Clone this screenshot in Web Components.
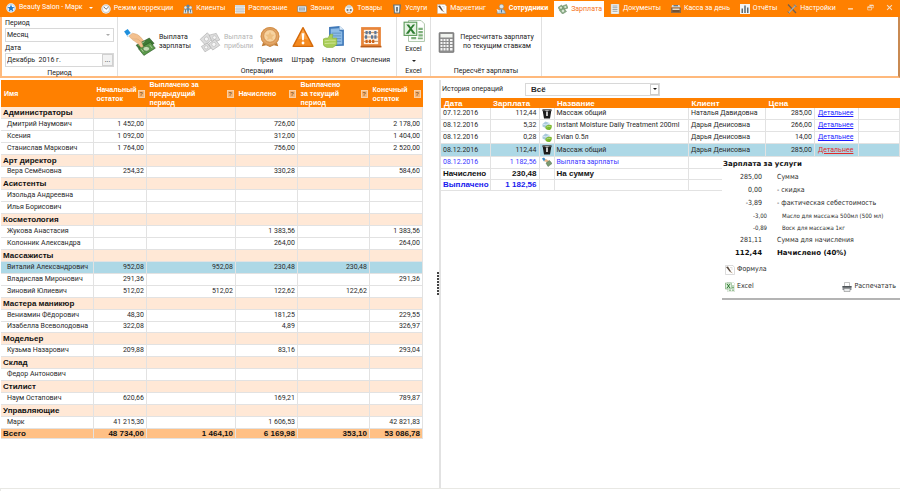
<!DOCTYPE html>
<html lang="ru">
<head>
<meta charset="utf-8">
<title>Beauty Salon</title>
<style>
html, body { height: 100%; margin: 0; }
body { background: #fff; color: #2a2a2a; font: 7px/9px Roboto, "Liberation Sans", sans-serif; overflow: hidden; }
</style>
</head>
<body>
<salon-app></salon-app>
<script>
const ICONS = {
  star: '<circle cx="10" cy="10" r="9.5" fill="#f4f9ff"/><circle cx="10" cy="10" r="7.6" fill="none" stroke="#7db4e6" stroke-width="1"/><path d="M10 3l2 4.900 5.200.4-4 3.400 1.300 5.100L10 14l-4.500 2.800 1.300-5.100-4-3.400L8 7.900z" fill="#1f78c8"/>',
  clock: '<circle cx="10" cy="10" r="9.500" fill="#e9edf0"/><circle cx="10" cy="10" r="7" fill="#fff" stroke="#9aa4ab"/><path d="M6 6l4 4.500L15 6" fill="none" stroke="#555" stroke-width="1.600"/>',
  people: '<g fill="#5a86a8"><circle cx="10" cy="4" r="3"/><path d="M6.500 8h7v7h-7z"/></g><g fill="#dfe9f0" stroke="#6d8190" stroke-width=".7"><circle cx="5" cy="7" r="3"/><path d="M1 19l1-8h6l1 8z"/><circle cx="15" cy="7" r="3"/><path d="M11 19l1-8h6l1 8z"/></g><path d="M5 11v6M15 11v6" stroke="#2b5f88" stroke-width="1.500"/>',
  calendar: '<rect x="0" y="2" width="20" height="17" fill="#f3f3f3"/><path d="M0 2h20v4H0z" fill="#d4dade"/><path d="M0 10h20M0 14.500h20M4 6v13M8 6v13M12 6v13M16 6v13" stroke="#9fa8b0" stroke-width="1"/>',
  phone: '<rect x="1" y="4" width="18" height="12" rx="2" fill="#e5eaee" stroke="#5d6a72"/><path d="M4 7h12v6H4z" fill="#8b979f"/><path d="M4 10h12M8 7v6M12 7v6" stroke="#dfe6ea"/>',
  goods: '<circle cx="10" cy="11" r="8.500" fill="#eef1f2"/><path d="M4 5l6-4 6 4-3 3H7z" fill="#c9d4da"/><circle cx="7" cy="12" r="2.200" fill="#7c6f66"/><circle cx="13.500" cy="12" r="2.200" fill="#7c6f66"/><path d="M6 16q4 2 8 0" stroke="#b78d6b" fill="none" stroke-width="1.500"/>',
  service: '<path d="M2 1h16l-2 18H4z" fill="#66747b"/><path d="M5 3h10l-1 14H6z" fill="#eef2f4"/><path d="M8.500 6h3v9h-3z" fill="#49565c"/>',
  note: '<path d="M1 1h15l3 4v14H1z" fill="#fff" stroke="#b8b8b8"/><path d="M2 4l4-1 6 10-2 1z" fill="#5a4a3e"/><path d="M10 14l2-1 4 4z" fill="#a58a6a"/><path d="M10 5h5M12 8h4" stroke="#c5c5c5"/>',
  person: '<circle cx="11" cy="5" r="4.500" fill="#dfe5e9" stroke="#78868e"/><path d="M2 19q0-8 9-9 8 1 8 9z" fill="#bcd0de" stroke="#6f7d86"/><path d="M1 10l5 2-2 5z" fill="#f3f6f8"/><path d="M11 11v6" stroke="#48779c" stroke-width="2"/>',
  money: '<g fill="#8fb08b" stroke="#5f7f5d" stroke-width="1"><path d="M0 7l7-5 4 6-7 5z"/><path d="M9 4l8-3 3 7-8 3z"/><path d="M3 13l8-5 6 7-8 5z"/></g><circle cx="6" cy="7.500" r="2" fill="#dbe8d8"/><circle cx="14.500" cy="6" r="2" fill="#dbe8d8"/><circle cx="10" cy="14" r="2.300" fill="#dbe8d8"/>',
  doc: '<rect x="2" y="0" width="16" height="20" fill="#f5f5f2" stroke="#b7b7b0"/><path d="M5 4h10M5 7.500h10M5 11h10M5 14.500h10" stroke="#7d8a90" stroke-width="1.500"/>',
  till: '<path d="M2 2h15l2 5H1z" fill="#d7dadb"/><path d="M0 7h20v11H0z" fill="#8d6a48"/><path d="M3 9h14v3H3z" fill="#e8d9c3"/><path d="M3 14h14" stroke="#3f2f22" stroke-width="1.500"/><path d="M5 3.500h9" stroke="#4a5960" stroke-width="2"/>',
  chart: '<rect x="0" y="0" width="20" height="20" fill="#f2f4f5"/><path d="M3 9h3v9H3zM8.500 3h3v15h-3zM14 7h3v11h-3z" fill="#5b6970"/>',
  tools: '<path d="M2 1l16 17" stroke="#6a5e55" stroke-width="2.500"/><path d="M18 2L3 18" stroke="#a2a9ad" stroke-width="2.500"/><path d="M14 1l5 5M1 15l4 4" stroke="#6d777d" stroke-width="2"/>',
  hand: '<path d="M0 4l6-4 6 8-6 5z" fill="#1f8fdc"/><path d="M5 11l7-5 2 2-7 6z" fill="#e9f4fc"/><path d="M8 12l6-5q9 1 13 6l6 7-4 2-8-5-8 0z" fill="#f3c08e" stroke="#d39a63" stroke-width=".8"/><g stroke="#244d1f" stroke-width=".9"><path d="M20 27l22-12 8 9-21 14z" fill="#3f7a35"/><path d="M24 33l20-11 8 10-19 12z" fill="#5b9a4a"/></g><ellipse cx="37" cy="33" rx="5.500" ry="4" fill="#c4dbb4" stroke="#3d6b33"/><path d="M29 34l3 4M43 27l4 5M24 27l10-6" stroke="#d2e4c5" stroke-width="1.200"/><path d="M14 18l10 7 4 6 4-2-3-7-6-5z" fill="#f3c08e" stroke="#d39a63" stroke-width=".6"/>',
  handSmall: '<path d="M0 3l4-2 4 5-4 3z" fill="#3a8ccb"/><path d="M4 8l4-4 8 5 2 4-5-1z" fill="#e8b78a"/><path d="M8 12l7-5 5 6-8 6z" fill="#7a9a72" stroke="#4f6d48"/>',
  cashGray: '<g fill="#dedede" stroke="#a8a8a8" stroke-width="1"><path d="M2 14L14 3l9 10-12 11z"/><path d="M17 7l12-3 6 11-12 5z"/><path d="M16 22l11-8 8 10-12 8z"/><path d="M4 26l10-6 6 9-10 6z"/></g><g fill="#f7f7f7" stroke="#b4b4b4"><circle cx="12.500" cy="13.500" r="3.500"/><circle cx="26" cy="11" r="3"/><circle cx="25" cy="22.500" r="3.500"/><circle cx="12" cy="27.500" r="2.800"/></g>',
  medal: '<path d="M9 25L5 37l8-2 7 3 7-3 8 2-4-12z" fill="#bf7b35"/><circle cx="20" cy="19" r="17" fill="#e3a566"/><circle cx="20" cy="19" r="16" fill="none" stroke="#d2924e" stroke-width="2"/><circle cx="20" cy="18" r="11.500" fill="#f7d3a0" stroke="#cf8b45" stroke-width="1.500"/><path d="M20 10l2.500 5.500 6 .6-4.500 4 1.300 5.900-5.300-3-5.300 3 1.300-5.900-4.500-4 6-.6z" fill="#eebf80"/>',
  warn: '<path d="M20 3L38 37H2z" fill="#f58a1f" stroke="#d46a0b" stroke-width="2.500" stroke-linejoin="round"/><path d="M20 6L30 25q-12-3-19-1z" fill="#ffb05a" opacity=".6"/><path d="M17.500 13h5l-1 13h-3z" fill="#fff"/><circle cx="20" cy="31" r="2.600" fill="#fff"/>',
  tax: '<path d="M11 2l19-2 8 7v29l-27 1z" fill="#3f78b8"/><path d="M14 5l15-1 1 5 5 1v23l-21 1z" fill="#8dbbe6"/><path d="M16 13h17M16 18h17M16 23h17M16 28h17" stroke="#4d80b5" stroke-width="1.200"/><path d="M30 0v7h8z" fill="#dcebf8"/><path d="M0 24q5-3 9-2l4-7h5l-1 7h8v12l-7 5H7q-6-2-7-6z" fill="#a9cd58" stroke="#83ab3a" stroke-width="1"/><path d="M3 27q9-2 20-1M3 32q9-1 20-1" stroke="#d4e8a0" stroke-width="1.500" fill="none"/>',
  abacus: '<path d="M2 2h36v36H2z" fill="#e8853a"/><path d="M7 7h26v26H7z" fill="#fff3e4"/><path d="M7 12h26M7 20h26M7 28h26" stroke="#a0662e" stroke-width="1.200"/><g fill="#5e7898"><path d="M10 9h4v6h-4zM16 9h4v6h-4zM26 9h4v6h-4zM9 17h4v6H9zM20 17h4v6h-4zM26 17h4v6h-4z"/></g><g fill="#cf6319"><path d="M10 25h4v6h-4zM16 25h4v6h-4zM22 25h4v6h-4z"/></g><path d="M1 36h38v3H1z" fill="#b95b17"/>',
  excel: '<path d="M10 1h23l6 6v32H10z" fill="#fff" stroke="#9dba99" stroke-width="1.500"/><path d="M1 3h25v26H1z" fill="#5b9a59"/><path d="M3 5h21v22H3z" fill="#e7f3e4"/><path d="M6 8h5l3 5 4-5h4l-6 8 7 9h-5l-4-6-4 6H5l7-9z" fill="#2e7d32"/><g fill="#7db07a"><path d="M28 14h8v4h-8zM28 20h8v4h-8zM28 26h8v4h-8zM15 31h9v4h-9zM27 32h9v3h-9z"/></g>',
  calc: '<rect x="2" y="1" width="30" height="40" rx="2" fill="#8c8c8c" stroke="#5d5d5d"/><rect x="5" y="4" width="24" height="7" fill="#f1f4ef"/><g fill="#f4f4f4"><path d="M5 14h4v4H5zM11 14h4v4h-4zM17 14h4v4h-4zM24 14h5v4h-5zM5 20h4v4H5zM11 20h4v4h-4zM17 20h4v4h-4zM24 20h5v4h-5zM5 26h4v4H5zM11 26h4v4h-4zM17 26h4v4h-4zM24 26h5v4h-5zM5 32h4v5H5zM11 32h4v5h-4zM17 32h4v5h-4zM24 32h5v5h-5z"/></g>',
  bin: '<path d="M1 1h18l-3 18H4z" fill="#1b1b1b"/><path d="M1 1h18v3H1z" fill="#555"/><path d="M8.500 6h3v8h-3z" fill="#fff"/><path d="M6 3q4 4 8 0" fill="#fff"/>',
  cubes: '<path d="M1 6l6-5 8 3-1 8-7 2-6-3z" fill="#a9c9dc"/><path d="M1 6l7 2 7-4" stroke="#e6f1f7" stroke-width="1.500" fill="none"/><path d="M7 11q4-5 12-3 2 6-3 10-6 1-9-3z" fill="#7cb82f"/><path d="M9 12q4-2 8-1" stroke="#c8e594" stroke-width="1.500" fill="none"/>',
  printer: '<path d="M5 1h10v8H5z" fill="#fff" stroke="#888"/><path d="M1 8h18v8H1z" fill="#8e9397"/><path d="M1 8h18v3H1z" fill="#4e5458"/><path d="M4 13h12v6H4z" fill="#e8eaeb" stroke="#777"/>',
  min: '<path d="M3 14h14" stroke="#fff" stroke-width="3"/>',
  restore: '<path d="M7 3h11v8h-4" fill="none" stroke="#f3ddc8" stroke-width="2"/><path d="M2 8h11v9H2z" fill="none" stroke="#f3ddc8" stroke-width="2"/><path d="M2 9h11M7 4h11" stroke="#f3ddc8" stroke-width="3"/>',
  close: '<path d="M3 3l14 14M17 3L3 17" stroke="#f3ddc8" stroke-width="3"/>'
};
const BOXES = { hand: '0 0 53 45', cashGray: '0 0 37 37', medal: '0 0 40 40', warn: '0 0 40 40', tax: '0 0 40 40', abacus: '0 0 40 40', excel: '0 0 40 40', calc: '0 0 34 42' };

const define = (name, render) => customElements.define(name, class extends HTMLElement {
  connectedCallback() {
    if (this.shadowRoot) return;
    const t = document.createElement('template');
    t.innerHTML = render(this);
    this.attachShadow({ mode: 'open' }).append(t.content.cloneNode(true));
  }
});

const RESET = `:host,*{box-sizing:border-box} button,input,select{font:inherit;color:inherit;margin:0;padding:0;border:0;background:none;border-radius:0}`;

define('ui-icon', el => `
  <style>:host{display:block;flex:none;width:10px;height:10px} svg{display:block;width:100%;height:100%}</style>
  <svg viewBox="${BOXES[el.getAttribute('name')] || '0 0 20 20'}" aria-hidden="true">${ICONS[el.getAttribute('name')]}</svg>`);

define('app-tab', el => `
  <style>${RESET}
    :host{display:flex;color:#fff}
    button{display:flex;align-items:center;gap:3px;padding:0 4px;white-space:nowrap}
    :host([strong]) button{font-weight:bold}
    :host([active]){margin-top:1px}
    :host([active]) button{background:#fff;color:#f5741c;padding:0 2px 0 4px}
  </style>
  <button role="tab" aria-selected="${el.hasAttribute('active')}"><ui-icon name="${el.getAttribute('icon')}"></ui-icon><slot></slot></button>`);

define('title-bar', () => `
  <style>${RESET}
    :host{display:flex;height:17px;background:#ff8000;color:#fff}
    .brand{display:flex;align-items:center;gap:3px;padding:0 4px 2px 6px;white-space:nowrap}
    .brand i{border:2px solid transparent;border-top-color:#fff;border-bottom:0;margin-left:3px}
    nav{flex:1;display:flex;justify-content:space-between}
    .win{display:flex;align-items:center;justify-content:space-between;width:60px;padding:0 7px 2px 7px}
    .win ui-icon{width:7px;height:7px}
  </style>
  <button class="brand"><ui-icon name="star"></ui-icon>Beauty Salon - Марк<i></i></button>
  <nav role="tablist">
    <app-tab icon="clock">Режим коррекции</app-tab>
    <app-tab icon="people">Клиенты</app-tab>
    <app-tab icon="calendar">Расписание</app-tab>
    <app-tab icon="phone">Звонки</app-tab>
    <app-tab icon="goods">Товары</app-tab>
    <app-tab icon="service">Услуги</app-tab>
    <app-tab icon="note">Маркетинг</app-tab>
    <app-tab icon="person" strong>Сотрудники</app-tab>
    <app-tab icon="money" active>Зарплата</app-tab>
    <app-tab icon="doc">Документы</app-tab>
    <app-tab icon="till">Касса за день</app-tab>
    <app-tab icon="chart">Отчёты</app-tab>
    <app-tab icon="tools">Настройки</app-tab>
  </nav>
  <div class="win">
    <button aria-label="Свернуть"><ui-icon name="min"></ui-icon></button>
    <button aria-label="Восстановить"><ui-icon name="restore"></ui-icon></button>
    <button aria-label="Закрыть"><ui-icon name="close"></ui-icon></button>
  </div>`);

define('ribbon-group', el => `
  <style>${RESET}
    :host{display:flex;flex-direction:column;border-right:1px solid #e0e0e0;padding-top:1px}
    .body{flex:1;display:flex}
    .label{text-align:center;line-height:10px}
  </style>
  <div class="body"><slot></slot></div><div class="label">${el.getAttribute('label')}</div>`);

define('ribbon-button', el => `
  <style>${RESET}
    :host{display:flex}
    button{display:flex;flex-direction:column;align-items:center;white-space:nowrap}
    ui-icon{width:22px;height:22px}
    :host([wide]) button{flex-direction:row;gap:3px}
    :host([wide=hand]) ui-icon{width:32px;height:27px}
    :host([wide=calc]) ui-icon{width:17px;height:21px}
    :host([wide=calc]) button{gap:5px}
    :host([wide=hand]) button, :host([wide=gray]) button{text-align:left}
    :host([tall]) button{padding-top:8px;gap:8px;justify-content:flex-start}
    :host([menu]) button{gap:3px;padding-top:2px;justify-content:flex-start}
    :host([menu]) i{display:block;border:2px solid transparent;border-top-color:#222;border-bottom:0;margin-top:3px}
    button:disabled{color:#b4b4b4}
  </style>
  <button ${el.hasAttribute('disabled') ? 'disabled' : ''}><ui-icon name="${el.getAttribute('icon')}"></ui-icon><span><slot></slot></span>${el.hasAttribute('menu') ? '<i></i>' : ''}</button>`);

define('period-fields', () => `
  <style>${RESET}
    :host{display:flex;flex-direction:column;flex:1;padding:0 3px 0 3px}
    label{line-height:10px}
    .box{display:flex;align-items:center;height:14px;border:1px solid #d8d8d8;background:#fff;margin-bottom:1px}
    select,input{flex:1;min-width:0;height:12px;appearance:none;padding-left:1px;outline:0}
    i{border:2px solid transparent;border-top-color:#aaa;border-bottom:0;margin-right:3px}
    button{width:11px;height:12px;border:1px solid #d0d0d0;background:#f2f2f2;line-height:8px}
  </style>
  <label for="p">Период</label>
  <div class="box"><select id="p"><option>Месяц</option></select><i></i></div>
  <label for="d">Дата</label>
  <div class="box"><input id="d" value="Декабрь  2016 г."><button aria-label="Выбрать дату">...</button></div>`);

define('app-ribbon', () => `
  <style>${RESET}
    :host{display:flex;height:61px;border:solid #ffb97c;border-width:0 2px 2px;border-right-color:#c98a52;background:#fff;color:#222}
    ribbon-group:nth-of-type(1){width:116px}
    ribbon-group:nth-of-type(2){width:279px}
    ribbon-group:nth-of-type(3){width:34px}
    ribbon-group:nth-of-type(4){width:111px}
    .ops{flex:1;display:grid;grid-template-columns:75px 58px 30px 32px 30px 1fr;padding:0 4px 0 6px}
    .ops [tall]:not([icon=medal]){justify-content:center}
    .mid{flex:1;display:flex;justify-content:center}
  </style>
  <ribbon-group label="Период"><period-fields></period-fields></ribbon-group>
  <ribbon-group label="Операции"><div class="ops">
    <ribbon-button wide="hand" icon="hand">Выплата<br>зарплаты</ribbon-button>
    <ribbon-button wide="gray" icon="cashGray" disabled>Выплата<br>прибыли</ribbon-button>
    <ribbon-button tall icon="medal">Премия</ribbon-button>
    <ribbon-button tall icon="warn">Штраф</ribbon-button>
    <ribbon-button tall icon="tax">Налоги</ribbon-button>
    <ribbon-button tall icon="abacus">Отчисления</ribbon-button>
  </div></ribbon-group>
  <ribbon-group label="Excel"><div class="mid"><ribbon-button menu icon="excel">Excel</ribbon-button></div></ribbon-group>
  <ribbon-group label="Пересчёт зарплаты"><div class="mid"><ribbon-button wide="calc" icon="calc">Пересчитать зарплату<br>по текущим ставкам</ribbon-button></div></ribbon-group>`);

const TABLE = `
  table{width:100%;border-collapse:collapse;table-layout:fixed}
  th,td{padding:0;font-weight:normal;text-align:left;white-space:nowrap;overflow:hidden}
  tbody td,tbody th,tfoot td,tfoot th{border-right:1px solid #e2e2e2;border-bottom:1px solid #e2e2e2;line-height:9px}
  thead{background:#ff8000;color:#fff}
  thead th{font:bold 7px/9px "Liberation Sans",sans-serif}
  .n{text-align:right}
  .sel{background:#add8e6}`;

const STAFF = [
  ['Администраторы'],
  ['Дмитрий Наумович', '1 452,00', '', '726,00', '', '2 178,00'],
  ['Ксения', '1 092,00', '', '312,00', '', '1 404,00'],
  ['Станислав Маркович', '1 764,00', '', '756,00', '', '2 520,00'],
  ['Арт директор'],
  ['Вера Семёновна', '254,32', '', '330,28', '', '584,60'],
  ['Асистенты'],
  ['Изольда Андреевна', '', '', '', '', ''],
  ['Илья Борисович', '', '', '', '', ''],
  ['Косметология'],
  ['Жукова Анастасия', '', '', '1 383,56', '', '1 383,56'],
  ['Колонник Александра', '', '', '264,00', '', '264,00'],
  ['Массажисты'],
  ['Виталий Александрович', '952,08', '952,08', '230,48', '230,48', ''],
  ['Владислав Миронович', '291,36', '', '', '', '291,36'],
  ['Зиновий Юлиевич', '512,02', '512,02', '122,62', '122,62', ''],
  ['Мастера маникюр'],
  ['Вениамин Фёдорович', '48,30', '', '181,25', '', '229,55'],
  ['Изабелла Всеволодовна', '322,08', '', '4,89', '', '326,97'],
  ['Модельер'],
  ['Кузьма Назарович', '209,88', '', '83,16', '', '293,04'],
  ['Склад'],
  ['Федор Антонович', '', '', '', '', ''],
  ['Стилист'],
  ['Наум Остапович', '620,66', '', '169,21', '', '789,87'],
  ['Управляющие'],
  ['Марк', '41 215,30', '', '1 606,53', '', '42 821,83']
];
const TOTAL = ['Всего', '48 734,00', '1 464,10', '6 169,98', '353,10', '53 086,78'];
const HEADS = ['Начальный<br>остаток', 'Выплачено за<br>предыдущий<br>период', 'Начислено', 'Выплачено<br>за текущий<br>период', 'Конечный<br>остаток'];
const cells = r => [1, 2, 3, 4, 5].map(i => `<td class="n">${r[i] || ''}</td>`).join('');

define('staff-table', () => `
  <style>${RESET}${TABLE}
    :host{display:block}
    table{height:359px}
    thead th{height:27px;padding-left:3px}
    thead div{display:flex;align-items:center;justify-content:space-between}
    thead button{flex:none;width:7px;height:8px;margin-right:2px;background:#f7b473;border:1px solid #f9cfa4;color:#8a5a2a;font:bold 6px/6px "Liberation Sans",sans-serif}
    tbody th{padding-left:6px}
    td{padding-right:2px}
    .group{background:#ffe8d6}
    .group th,tfoot th,tfoot td{font:bold 8px/9px "Liberation Sans",sans-serif;color:#111;padding-left:2px}
    tfoot{background:#ffc085}
  </style>
  <table>
    <colgroup><col><col style="width:53px"><col style="width:89px"><col style="width:62px"><col style="width:72px"><col style="width:53px"></colgroup>
    <thead><tr><th scope="col">Имя</th>${HEADS.map(h => `<th scope="col"><div><span>${h}</span><button aria-label="Справка">?</button></div></th>`).join('')}</tr></thead>
    <tbody>${STAFF.map(r => `<tr class="${r.length === 1 ? 'group' : r[0].startsWith('Виталий') ? 'sel' : ''}"><th scope="row">${r[0]}</th>${cells(r)}</tr>`).join('')}</tbody>
    <tfoot><tr><th scope="row">${TOTAL[0]}</th>${cells(TOTAL)}</tr></tfoot>
  </table>`);

const OPS = [
  ['07.12.2016', '112,44', 'bin', 'Массаж общий', 'Наталья Давидовна', '285,00'],
  ['08.12.2016', '5,32', 'cubes', 'Instant Moisture Daily Treatment 200ml', 'Дарья Денисовна', '266,00'],
  ['08.12.2016', '0,28', 'cubes', 'Evian 0.5л', 'Дарья Денисовна', '14,00'],
  ['08.12.2016', '112,44', 'bin', 'Массаж общий', 'Дарья Денисовна', '285,00', 'sel'],
  ['08.12.2016', '1 182,56', 'handSmall', 'Выплата зарплаты', '', '', 'pay'],
  ['Начислено', '230,48', '', 'На сумму', '', '', 'sum'],
  ['Выплачено', '1 182,56', '', '', '', '', 'sum paid']
];

define('operations-table', () => `
  <style>${RESET}${TABLE}
    :host{display:block}
    table{height:93px}
    thead th{height:10px;padding-left:3px;font-size:8px}
    td{padding:0 2px}
    td ui-icon{margin:0 auto}
    a{color:#1a1aff;margin-left:1px}
    .sel a{color:#e02b2b}
    .pay{color:#3a36ff}
    .sum td{font:bold 8px/9px "Liberation Sans",sans-serif;color:#111}
    .sum.paid td{color:#1818ee}
  </style>
  <table>
    <colgroup><col style="width:49px"><col style="width:49px"><col style="width:15px"><col><col style="width:77px"><col style="width:49px"><col style="width:44px"><col style="width:41px"></colgroup>
    <thead><tr><th scope="col">Дата</th><th scope="col">Зарплата</th><td></td><th scope="col">Название</th><th scope="col">Клиент</th><th scope="col">Цена</th><td></td><td></td></tr></thead>
    <tbody>${OPS.map(r => `<tr class="${r[6] || ''}"><td>${r[0]}</td><td class="n">${r[1]}</td><td>${r[2] ? `<ui-icon name="${r[2]}"></ui-icon>` : ''}</td><td>${r[3]}</td><td>${r[4]}</td><td class="n">${r[5]}</td><td>${r[5] ? '<a href="#details">Детальнее</a>' : ''}</td><td></td></tr>`).join('')}</tbody>
  </table>`);

define('salary-details', () => `
  <style>${RESET}
    :host{display:block;background:#fff;border-bottom:2px solid #b4b4b4;font-family:"DejaVu Sans Condensed","DejaVu Sans",sans-serif;padding:2px 4px 4px 1px}
    h2{margin:0;font:bold 7px/11px "DejaVu Sans",sans-serif;color:#111}
    dl{margin:1px 0 0;display:grid;grid-template-columns:39px 1fr;column-gap:15px;line-height:13px}
    dt{text-align:right} dd{margin:0;white-space:nowrap}
    dt.s{font-size:6px;margin-right:-5px;line-height:12px} dd.s{font-size:6px;padding-left:5px;line-height:12px}
    .b{font-family:"DejaVu Sans",sans-serif;font-weight:bold;color:#111}
    button{display:flex;align-items:center;gap:2px}
    .row{display:flex;justify-content:space-between;padding:2px 0 0 2px;height:17px;align-items:center}
  </style>
  <h2>Зарплата за услуги</h2>
  <dl>
    <dt>285,00</dt><dd>Сумма</dd>
    <dt>0,00</dt><dd>- скидка</dd>
    <dt>-3,89</dt><dd>- фактическая себестоимость</dd>
    <dt class="s">-3,00</dt><dd class="s">Масло для массажа 500мл (500 мл)</dd>
    <dt class="s">-0,89</dt><dd class="s">Воск для массажа 1кг</dd>
    <dt>281,11</dt><dd>Сумма для начисления</dd>
    <dt class="b">112,44</dt><dd class="b">Начислено (40%)</dd>
  </dl>
  <div class="row"><button><ui-icon name="note"></ui-icon>Формула</button></div>
  <div class="row"><button><ui-icon name="excel"></ui-icon>Excel</button><button><ui-icon name="printer"></ui-icon>Распечатать</button></div>`);

define('operations-filter', () => `
  <style>${RESET}
    :host{display:flex;align-items:center;height:18px;padding-left:1px}
    label{width:83px}
    .box{display:flex;align-items:center;width:135px;height:13px;border:1px solid #d8d8d8}
    select{flex:1;height:11px;appearance:none;font:bold 8px/9px "Liberation Sans",sans-serif;padding-left:5px}
    span{display:grid;place-items:center;width:9px;height:11px;border:1px solid #ccc}
    i{border:2px solid transparent;border-top-color:#111;border-bottom:0}
  </style>
  <label for="h">История операций</label>
  <div class="box"><select id="h"><option>Всё</option></select><span><i></i></span></div>`);

define('pane-splitter', () => `
  <style>${RESET}
    :host{display:flex;align-items:center;width:4px;border-right:2px solid #e2e2e2}
    i{width:2px;height:24px;background:repeating-linear-gradient(#444 0 2px,#fff 2px 3px)}
  </style><i></i>`);

define('salon-app', () => `
  <style>
    :host{display:flex;flex-direction:column;height:100vh}
    main{flex:1;display:flex;padding-top:2px;min-height:0}
    .left{flex:422 1 0;padding:0 14px 0 1px;min-width:0}
    .right{flex:459 1 0;min-width:0;position:relative}
    salary-details{position:absolute;right:0;top:77px;width:178px}
    footer{height:3px;box-sizing:border-box;border:solid #e8e8e4;border-width:1px 0 0 1px}
  </style>
  <title-bar></title-bar>
  <app-ribbon></app-ribbon>
  <main>
    <div class="left"><staff-table></staff-table></div>
    <pane-splitter></pane-splitter>
    <div class="right"><operations-filter></operations-filter><operations-table></operations-table><salary-details></salary-details></div>
  </main>
  <footer></footer>`);
</script>
</body>
</html>
